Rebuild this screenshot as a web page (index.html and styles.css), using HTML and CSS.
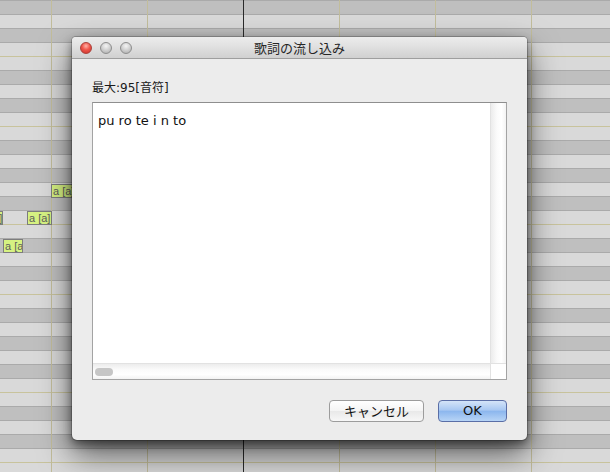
FILE: index.html
```html
<!DOCTYPE html>
<html lang="ja">
<head>
<meta charset="utf-8">
<title>歌詞の流し込み</title>
<link rel="stylesheet" href="styles.css">
</head>
<body>
<div class="roll">
  <div class="note" style="left:51px;top:184px;width:30px">a [a]</div>
  <div class="note" style="left:27px;top:211px;width:25px">a [a]</div>
  <div class="note" style="left:-21px;top:211px;width:24px">a [a]</div>
  <div class="note" style="left:3px;top:239px;width:20px">a [a]</div>
  <div class="playhead"></div>

  <div class="window">
    <div class="titlebar">
      <div class="lights">
        <span class="light close"></span>
        <span class="light"></span>
        <span class="light"></span>
      </div>
      <div class="title">歌詞の流し込み</div>
      <div></div>
    </div>
    <div class="body">
      <div class="label">最大:95[音符]</div>
      <div class="textbox">
        <div class="main">
          <div class="text">pu ro te i n to</div>
          <div class="vscroll"></div>
        </div>
        <div class="bottom">
          <div class="hscroll"><span class="thumb"></span></div>
          <div class="corner"></div>
        </div>
      </div>
      <div class="buttons">
        <button class="btn">キャンセル</button>
        <button class="btn ok">OK</button>
      </div>
    </div>
  </div>
</div>
</body>
</html>
```
FILE: styles.css
```css
html, body {
  margin: 0;
  padding: 0;
}

body {
  width: 610px;
  height: 472px;
  overflow: hidden;
  font-family: "DejaVu Sans", "Noto Sans CJK JP", sans-serif;
}

.roll {
  position: relative;
  width: 610px;
  height: 472px;
  overflow: hidden;
  background-color: #d8d8d8;
  background-image:
    repeating-linear-gradient(90deg, #c2bd9b 0 1px, transparent 1px 96px),
    linear-gradient(to bottom, transparent 0 56px, #c8c39c 56px 57px, transparent 57px 126px, #c8c39c 126px 127px, transparent 127px 168px),
    repeating-linear-gradient(to bottom, #aaaaaa 0 1px, transparent 1px 14px),
    linear-gradient(to bottom,
      #bfbfbf 0 14px, #d9d9d9 14px 28px, #bfbfbf 28px 42px, #d9d9d9 42px 70px,
      #bfbfbf 70px 84px, #d9d9d9 84px 98px, #bfbfbf 98px 112px, #d9d9d9 112px 140px,
      #bfbfbf 140px 154px, #d9d9d9 154px 168px);
  background-size: 96px 100%, 100% 168px, 100% 14px, 100% 168px;
  background-position: 51px 0, 0 0, 0 0, 0 0;
}

.playhead {
  position: absolute;
  left: 243px;
  top: 0;
  width: 1px;
  height: 472px;
  background: #2a2a2a;
}

.note {
  position: absolute;
  height: 14px;
  box-sizing: border-box;
  border: 1px solid #7d7d7d;
  background: #d6f282;
  color: #5e5e5e;
  font-family: "Liberation Sans", sans-serif;
  font-size: 11px;
  line-height: 12px;
  padding-left: 1px;
  white-space: nowrap;
  overflow: hidden;
}

.window {
  position: absolute;
  left: 72px;
  top: 37px;
  width: 455px;
  height: 403px;
  background: #ececec;
  border-radius: 4px 4px 5px 5px;
  box-shadow:
    0 0 0 1px rgba(0, 0, 0, 0.2),
    0 4px 10px rgba(0, 0, 0, 0.45),
    0 14px 32px rgba(0, 0, 0, 0.6);
  display: flex;
  flex-direction: column;
  overflow: hidden;
}

.titlebar {
  height: 21px;
  border-bottom: 1px solid #9e9e9e;
  background: linear-gradient(to bottom, #ececec 0%, #e2e2e2 40%, #d0d0d0 100%);
  display: grid;
  grid-template-columns: 1fr auto 1fr;
  align-items: center;
  flex: none;
}

.lights {
  display: flex;
  gap: 8px;
  padding-left: 8px;
  padding-top: 1px;
}

.light {
  width: 12px;
  height: 12px;
  box-sizing: border-box;
  border-radius: 50%;
  border: 1px solid #8e8e8e;
  background: radial-gradient(circle at 50% 30%, #f4f4f4 0, #d3d3d3 45%, #a9a9a9 100%);
}

.light.close {
  border-color: #a9403a;
  background: radial-gradient(circle at 50% 30%, #ffb3a8 0, #f0554a 45%, #c8302a 100%);
}

.title {
  font-size: 13px;
  color: #262626;
  font-family: "Noto Sans CJK JP", sans-serif;
  line-height: 21px;
}

.body {
  flex: 1;
  padding: 21px 20px 18px;
  display: flex;
  flex-direction: column;
}

.label {
  font-size: 12px;
  line-height: 16px;
  color: #1a1a1a;
  height: 16px;
  margin-bottom: 6px;
}

.textbox {
  height: 278px;
  box-sizing: border-box;
  border: 1px solid #a3a3a3;
  border-top-color: #8e8e8e;
  background: #fff;
  display: flex;
  flex-direction: column;
}

.main {
  flex: 1;
  display: flex;
}

.text {
  flex: 1;
  padding: 10px 5px 0;
  font-size: 13px;
  line-height: 16px;
  color: #111;
}

.vscroll {
  width: 15px;
  border-left: 1px solid #e2e2e2;
  background: linear-gradient(to right, #ececec, #fbfbfb 40%, #ffffff 70%, #f3f3f3);
}

.bottom {
  height: 15px;
  display: flex;
  border-top: 1px solid #e2e2e2;
}

.hscroll {
  flex: 1;
  background: linear-gradient(to bottom, #ececec, #fbfbfb 40%, #ffffff 70%, #f3f3f3);
  display: flex;
  align-items: center;
  padding-left: 2px;
}

.thumb {
  width: 18px;
  height: 8px;
  border-radius: 4px;
  background: #c6c6c6;
}

.corner {
  width: 15px;
  border-left: 1px solid #e2e2e2;
  background: #fff;
}

.buttons {
  margin-top: 20px;
  display: flex;
  justify-content: flex-end;
  gap: 14px;
}

.btn {
  height: 22px;
  box-sizing: border-box;
  margin: 0;
  padding: 0;
  border: 1px solid #9c9c9c;
  border-radius: 4px;
  background: linear-gradient(to bottom, #ffffff, #f4f4f4 50%, #e9e9e9 51%, #f7f7f7);
  font-family: "Noto Sans CJK JP", sans-serif;
  font-size: 13px;
  line-height: 20px;
  color: #111;
  width: 95px;
}

.btn.ok {
  width: 69px;
  border-color: #5a6ea6;
  background: linear-gradient(to bottom, #d4e4f8, #a8c8f2 45%, #8db7ee 52%, #b7d4f6);
  font-family: "DejaVu Sans", sans-serif;
}
```
